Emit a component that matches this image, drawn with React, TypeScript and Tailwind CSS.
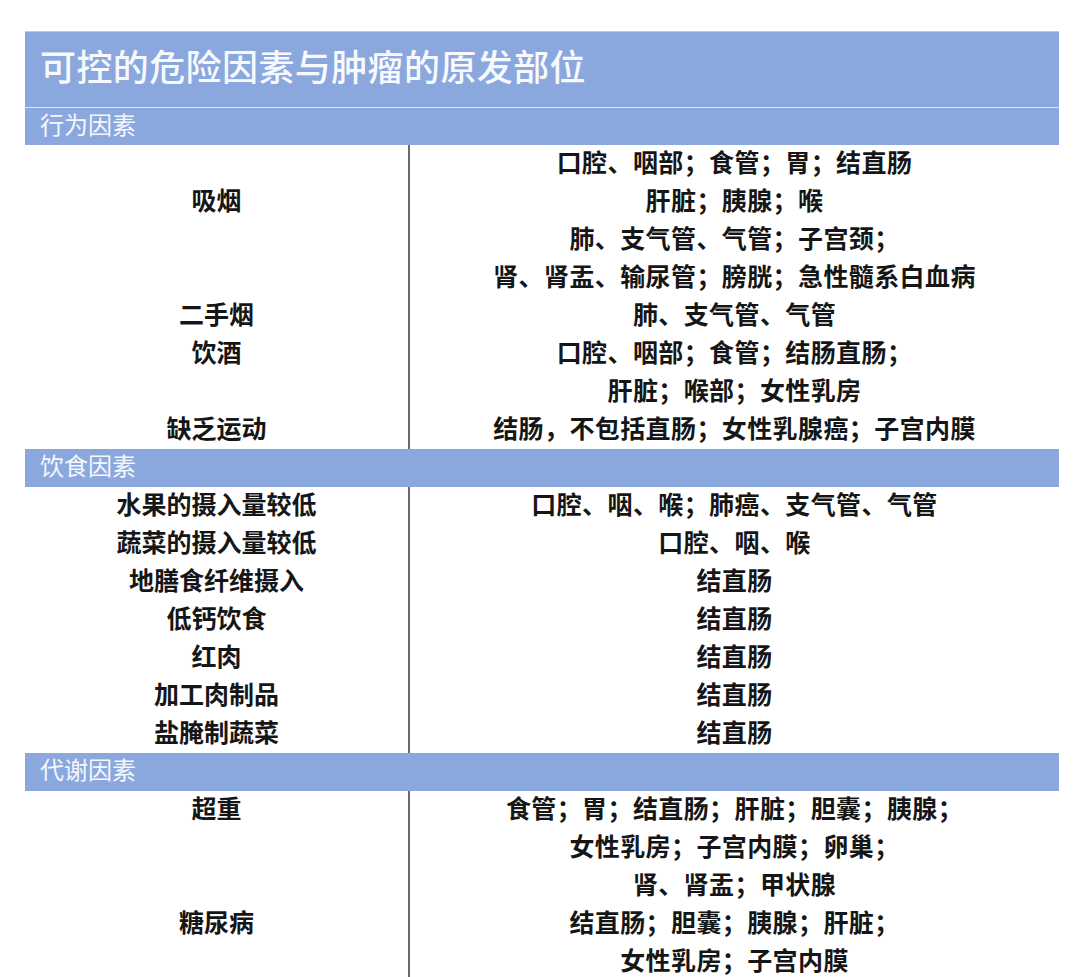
import React from "react";

type Row = [string, string];

const sections: { title: string; rows: Row[] }[] = [
  {
    title: "行为因素",
    rows: [
      ["", "口腔、咽部；食管；胃；结直肠"],
      ["吸烟", "肝脏；胰腺；喉"],
      ["", "肺、支气管、气管；子宫颈；"],
      ["", "肾、肾盂、输尿管；膀胱；急性髓系白血病"],
      ["二手烟", "肺、支气管、气管"],
      ["饮酒", "口腔、咽部；食管；结肠直肠；"],
      ["", "肝脏；喉部；女性乳房"],
      ["缺乏运动", "结肠，不包括直肠；女性乳腺癌；子宫内膜"],
    ],
  },
  {
    title: "饮食因素",
    rows: [
      ["水果的摄入量较低", "口腔、咽、喉；肺癌、支气管、气管"],
      ["蔬菜的摄入量较低", "口腔、咽、喉"],
      ["地膳食纤维摄入", "结直肠"],
      ["低钙饮食", "结直肠"],
      ["红肉", "结直肠"],
      ["加工肉制品", "结直肠"],
      ["盐腌制蔬菜", "结直肠"],
    ],
  },
  {
    title: "代谢因素",
    rows: [
      ["超重", "食管；胃；结直肠；肝脏；胆囊；胰腺；"],
      ["", "女性乳房；子宫内膜；卵巢；"],
      ["", "肾、肾盂；甲状腺"],
      ["糖尿病", "结直肠；胆囊；胰腺；肝脏；"],
      ["", "女性乳房；子宫内膜"],
    ],
  },
];

const font = { fontFamily: '"Noto Sans CJK SC", "Noto Sans", sans-serif' };

export default function App() {
  return (
    <div className="bg-white min-h-[977px] pt-[31px] pl-[25px]" style={font}>
      <div className="w-[1034px]">
        <div className="h-[76px] bg-[#8aa8de] flex items-center pl-[15px] pb-[10px] border-t border-[#b9cbeb]">
          <span className="text-[36px] font-medium text-[#f7f9fd] leading-none tracking-[0.4px]">
            可控的危险因素与肿瘤的原发部位
          </span>
        </div>
        <div className="h-px bg-[#dbe5f6]" />
        {sections.map((s, si) => (
          <div key={si}>
            <div
              className={
                si === 0
                  ? "h-[37px] bg-[#8aa8de] flex items-center pl-[15px] pb-[5px]"
                  : "h-[38px] bg-[#8aa8de] flex items-center pl-[15px] pb-[6px]"
              }
            >
              <span className="text-[24px] text-[#f4f7fc] leading-none">{s.title}</span>
            </div>
            <div className="grid grid-cols-[385px_1fr]">
              {s.rows.map((r, ri) => (
                <React.Fragment key={ri}>
                  <div className="h-[38px] border-r-2 border-[#6a6a6a] flex items-center justify-center pb-[6px]">
                    <span className="text-[25px] font-bold text-[#161616] leading-none">{r[0]}</span>
                  </div>
                  <div className="h-[38px] flex items-center justify-center pb-[6px]">
                    <span className="text-[25px] font-bold text-[#161616] leading-none tracking-[0.4px]">{r[1]}</span>
                  </div>
                </React.Fragment>
              ))}
            </div>
          </div>
        ))}
      </div>
    </div>
  );
}
